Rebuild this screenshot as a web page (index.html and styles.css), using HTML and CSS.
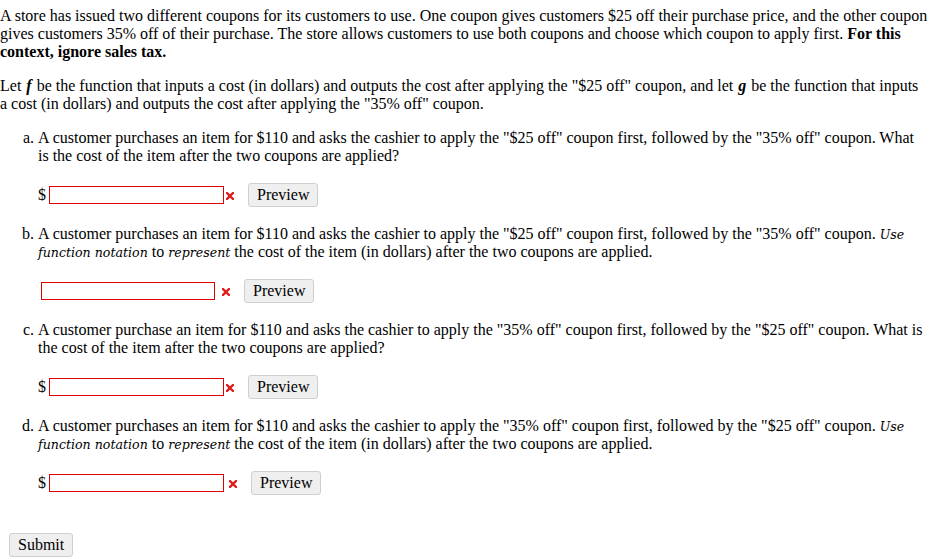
FILE: index.html
```html
<!DOCTYPE html>
<html>
<head>
<meta charset="utf-8">
<link rel="stylesheet" href="styles.css">
</head>
<body>
<div class="problem">
  <p>A store has issued two different coupons for its customers to use. One coupon gives customers $25 off their purchase price, and the other coupon gives customers 35% off of their purchase. The store allows customers to use both coupons and choose which coupon to apply first. <b>For this context, ignore sales tax.</b></p>
  <p class="defs">Let <i class="var">f</i> be the function that inputs a cost (in dollars) and outputs the cost after applying the "$25 off" coupon, and let <i class="var">g</i> be the function that inputs a cost (in dollars) and outputs the cost after applying the "35% off" coupon.</p>
  <ol class="parts">
    <li>
      <div class="question">A customer purchases an item for $110 and asks the cashier to apply the "$25 off" coupon first, followed by the "35% off" coupon. What is the cost of the item after the two coupons are applied?</div>
      <div class="answer">
        <span class="dollar">$</span><input class="field" type="text"><svg class="mark" width="8" height="8" viewBox="0 0 8 8"><path d="M1 1L7 7M7 1L1 7" stroke="#e31b1b" stroke-width="2.4" stroke-linecap="square"/></svg><button class="btn">Preview</button>
      </div>
    </li>
    <li>
      <div class="question">A customer purchases an item for $110 and asks the cashier to apply the "$25 off" coupon first, followed by the "35% off" coupon. <em class="hint">Use function notation</em> to <em class="hint">represent</em> the cost of the item (in dollars) after the two coupons are applied.</div>
      <div class="answer plain">
        <input class="field narrow" type="text"><svg class="mark far" width="8" height="8" viewBox="0 0 8 8"><path d="M1 1L7 7M7 1L1 7" stroke="#e31b1b" stroke-width="2.4" stroke-linecap="square"/></svg><button class="btn">Preview</button>
      </div>
    </li>
    <li>
      <div class="question">A customer purchase an item for $110 and asks the cashier to apply the "35% off" coupon first, followed by the "$25 off" coupon. What is the cost of the item after the two coupons are applied?</div>
      <div class="answer">
        <span class="dollar">$</span><input class="field" type="text"><svg class="mark" width="8" height="8" viewBox="0 0 8 8"><path d="M1 1L7 7M7 1L1 7" stroke="#e31b1b" stroke-width="2.4" stroke-linecap="square"/></svg><button class="btn">Preview</button>
      </div>
    </li>
    <li>
      <div class="question">A customer purchases an item for $110 and asks the cashier to apply the "35% off" coupon first, followed by the "$25 off" coupon. <em class="hint">Use function notation</em> to <em class="hint">represent</em> the cost of the item (in dollars) after the two coupons are applied.</div>
      <div class="answer">
        <span class="dollar">$</span><input class="field" type="text"><svg class="mark mid" width="8" height="8" viewBox="0 0 8 8"><path d="M1 1L7 7M7 1L1 7" stroke="#e31b1b" stroke-width="2.4" stroke-linecap="square"/></svg><button class="btn">Preview</button>
      </div>
    </li>
  </ol>
  <div class="actions"><button class="btn submit">Submit</button></div>
</div>
</body>
</html>
```
FILE: styles.css
```css
html, body {
  margin: 0;
  padding: 0;
  background: #fff;
}
body {
  font-family: "Liberation Serif", "Times New Roman", serif;
  font-size: 16px;
  line-height: 18px;
  color: #000;
}
.problem {
  padding-top: 7px;
}
p {
  margin: 0 0 16px 0;
}
.defs {
  padding-right: 6px;
}
.var {
  font-family: "Liberation Serif", serif;
  font-style: italic;
  font-weight: bold;
  padding: 0 1px;
}
.parts {
  list-style: lower-alpha;
  margin: 16px 0 0 0;
  padding: 0 5px 0 38px;
}
.parts li {
  margin: 0;
}
.hint {
  font-family: "DejaVu Serif", serif;
  font-style: italic;
  font-size: 12.6px;
  line-height: 1;
}
.answer {
  display: flex;
  align-items: center;
  height: 24px;
  margin: 18px 0;
}
.answer.plain {
  padding-left: 3px;
}
.dollar {
  margin-right: 3px;
}
.field {
  box-sizing: border-box;
  width: 175px;
  height: 18px;
  border: 1px solid #e00000;
  padding: 0 2px;
  margin: 0;
  font: inherit;
  background: #fff;
  outline: none;
}
.field.narrow {
  width: 174px;
}
.mark {
  display: block;
  margin: 1px 14px 0 2px;
}
.mark.mid {
  margin-left: 5px;
}
.mark.far {
  margin-left: 7px;
}
.btn {
  box-sizing: border-box;
  height: 24px;
  padding: 0 8px;
  font-family: "Liberation Serif", "Times New Roman", serif;
  font-size: 16px;
  color: #000;
  background: #efefef;
  border: 1px solid #cfcfcf;
  border-radius: 3px;
}
.actions {
  margin-top: 38px;
  padding-left: 9px;
}
.submit {
  width: 64px;
}
```
